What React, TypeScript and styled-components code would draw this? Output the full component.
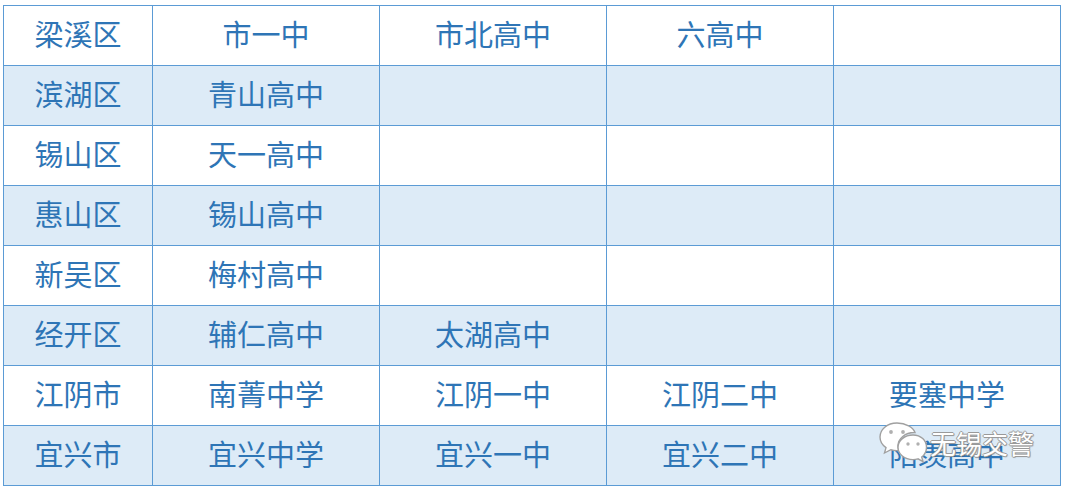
import React from "react";
import styled, { createGlobalStyle } from "styled-components";

const Global = createGlobalStyle`
  html, body { margin: 0; padding: 0; background: #ffffff; }
  body { font-family: "Noto Sans CJK SC", "Noto Sans", sans-serif; }
`;

const Page = styled.div`
  position: relative;
  width: 1067px;
  height: 492px;
  padding: 5px 0 0 3px;
  box-sizing: border-box;
`;

const Grid = styled.div`
  display: grid;
  grid-template-columns: 149px repeat(4, 227px);
  grid-auto-rows: 60px;
  width: max-content;
  border-left: 1px solid #5b9bd5;
  border-top: 1px solid #5b9bd5;
`;

const Cell = styled.div<{ $shade: boolean }>`
  box-sizing: border-box;
  border-right: 1px solid #5b9bd5;
  border-bottom: 1px solid #5b9bd5;
  background: ${(p) => (p.$shade ? "#ddebf7" : "#ffffff")};
  color: #2e75b6;
  font-size: 29px;
  padding-bottom: 5px;
  display: flex;
  align-items: center;
  justify-content: center;
  white-space: nowrap;
`;

const Watermark = styled.div`
  position: absolute;
  left: 878px;
  top: 420px;
  display: flex;
  align-items: center;
  gap: 2px;
  pointer-events: none;
`;

const MarkText = styled.span`
  font-family: "Noto Sans CJK SC", sans-serif;
  font-size: 26px;
  color: #ffffff;
  padding-bottom: 4px;
  text-shadow:
    1px 0 0 #9a9a9a, -1px 0 0 #9a9a9a, 0 1px 0 #9a9a9a, 0 -1px 0 #9a9a9a,
    1px 1px 1px rgba(0,0,0,0.35);
`;

const rows: string[][] = [
  ["梁溪区", "市一中", "市北高中", "六高中", ""],
  ["滨湖区", "青山高中", "", "", ""],
  ["锡山区", "天一高中", "", "", ""],
  ["惠山区", "锡山高中", "", "", ""],
  ["新吴区", "梅村高中", "", "", ""],
  ["经开区", "辅仁高中", "太湖高中", "", ""],
  ["江阴市", "南菁中学", "江阴一中", "江阴二中", "要塞中学"],
  ["宜兴市", "宜兴中学", "宜兴一中", "宜兴二中", "阳羡高中"],
];

const WeChatLogo = () => (
  <svg width="50" height="48" viewBox="0 0 50 48">
    <path
      d="M19 3C9 3 2 9.5 2 17c0 4.3 2.3 8 6 10.6L6.5 33l6.3-3.3c2 .6 4 .9 6.2.9 .6 0 1.2 0 1.8-.1C20.3 29 20 27.6 20 26c0-7.5 7.3-13.5 16.2-13.5h.8C35.2 7.3 27.9 3 19 3z"
      fill="#ffffff"
      stroke="#a0a0a0"
      strokeWidth="1.4"
    />
    <circle cx="13" cy="12" r="1.9" fill="#b0b0b0" />
    <circle cx="25" cy="12" r="1.9" fill="#b0b0b0" />
    <path
      d="M35 15c-8.5 0-15 5.5-15 12.3S26.5 39.6 35 39.6c1.7 0 3.4-.3 5-.8l5 2.8-1.3-4.6C46.5 35 48.5 31.4 48.5 27.3 48.5 20.5 43 15 35 15z"
      fill="#ffffff"
      stroke="#a0a0a0"
      strokeWidth="1.4"
    />
    <circle cx="30" cy="24" r="1.7" fill="#b0b0b0" />
    <circle cx="40" cy="24" r="1.7" fill="#b0b0b0" />
  </svg>
);

export default function App() {
  return (
    <>
      <Global />
      <Page>
        <Grid>
          {rows.map((r, i) =>
            r.map((c, j) => (
              <Cell key={`${i}-${j}`} $shade={i % 2 === 1}>
                {c}
              </Cell>
            ))
          )}
        </Grid>
        <Watermark>
          <WeChatLogo />
          <MarkText>无锡交警</MarkText>
        </Watermark>
      </Page>
    </>
  );
}
